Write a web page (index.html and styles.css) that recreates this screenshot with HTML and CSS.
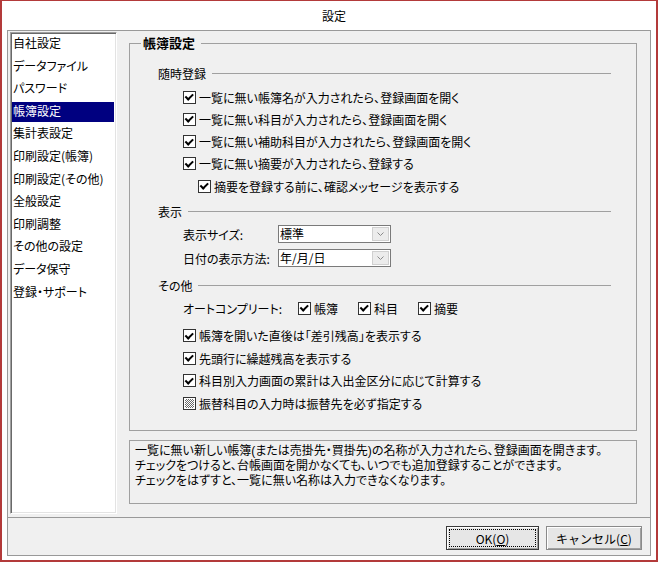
FILE: index.html
```html
<!DOCTYPE html>
<html lang="ja">
<head>
    <meta charset="UTF-8">
    <title>設定</title>
    <link rel="stylesheet" href="styles.css">
</head>
<body>
<div class="window">
    <div class="titlebar">設定</div>
    <div class="frame">
        <div class="main">
            <ul class="menu">
                <li>自社設定</li>
                <li>データファイル</li>
                <li>パスワード</li>
                <li class="selected">帳簿設定</li>
                <li>集計表設定</li>
                <li>印刷設定(帳簿)</li>
                <li>印刷設定(その他)</li>
                <li>全般設定</li>
                <li>印刷調整</li>
                <li>その他の設定</li>
                <li>データ保守</li>
                <li>登録・サポート</li>
            </ul>
            <div class="pane">
                <fieldset class="group">
                    <legend>帳簿設定</legend>

                    <div class="section first">随時登録</div>
                    <div class="checks top-checks">
                        <div class="row"><span class="cb"></span>一覧に無い帳簿名が入力されたら、登録画面を開く</div>
                        <div class="row"><span class="cb"></span>一覧に無い科目が入力されたら、登録画面を開く</div>
                        <div class="row"><span class="cb"></span>一覧に無い補助科目が入力されたら、登録画面を開く</div>
                        <div class="row"><span class="cb"></span>一覧に無い摘要が入力されたら、登録する</div>
                        <div class="row sub"><span class="cb"></span>摘要を登録する前に、確認メッセージを表示する</div>
                    </div>

                    <div class="section show">表示</div>
                    <div class="field">
                        <span class="field-label">表示サイズ:</span>
                        <span class="combo"><span class="combo-text">標準</span><span class="combo-btn"><svg width="7" height="4" viewBox="0 0 7 4"><path d="M0.5 0.5 L3.5 3.5 L6.5 0.5" fill="none" stroke="#8a8a8a"/></svg></span></span>
                    </div>
                    <div class="field">
                        <span class="field-label">日付の表示方法:</span>
                        <span class="combo"><span class="combo-text">年/月/日</span><span class="combo-btn"><svg width="7" height="4" viewBox="0 0 7 4"><path d="M0.5 0.5 L3.5 3.5 L6.5 0.5" fill="none" stroke="#8a8a8a"/></svg></span></span>
                    </div>

                    <div class="section other">その他</div>
                    <div class="auto">
                        <span class="auto-label">オートコンプリート:</span>
                        <span class="auto-item"><span class="cb"></span>帳簿</span>
                        <span class="auto-item"><span class="cb"></span>科目</span>
                        <span class="auto-item"><span class="cb"></span>摘要</span>
                    </div>
                    <div class="checks bottom-checks">
                        <div class="row"><span class="cb"></span>帳簿を開いた直後は「差引残高」を表示する</div>
                        <div class="row"><span class="cb"></span>先頭行に繰越残高を表示する</div>
                        <div class="row"><span class="cb"></span>科目別入力画面の累計は入出金区分に応じて計算する</div>
                        <div class="row"><span class="cb mixed"></span>振替科目の入力時は振替先を必ず指定する</div>
                    </div>
                </fieldset>

                <div class="help">
                    <div>一覧に無い新しい帳簿(または売掛先・買掛先)の名称が入力されたら、登録画面を開きます。</div>
                    <div>チェックをつけると、台帳画面を開かなくても、いつでも追加登録することができます。</div>
                    <div>チェックをはずすと、一覧に無い名称は入力できなくなります。</div>
                </div>
            </div>
        </div>
        <div class="buttons">
            <button class="btn default">OK(<u>O</u>)</button>
            <button class="btn">キャンセル(<u>C</u>)</button>
        </div>
    </div>
</div>
</body>
</html>
```

FILE: styles.css
```css
body {
    margin: 0;
    background: #fff;
    font-family: "Noto Sans CJK JP", sans-serif;
    font-size: 12px;
    color: #000;
    font-feature-settings: "palt";
}

.window {
    width: 658px;
    height: 562px;
    box-sizing: border-box;
    border: 2px solid #b33a3a;
    border-top-width: 1px;
    padding: 0 5px 4px;
    display: flex;
    flex-direction: column;
}

.titlebar {
    height: 29px;
    line-height: 29px;
    text-align: center;
    padding-left: 10px;
}

.frame {
    flex: 1;
    border: 1px solid #999;
    background: #f0f0f0;
    display: flex;
    flex-direction: column;
}

.main {
    height: 486px;
    display: flex;
}

/* left menu */
.menu {
    list-style: none;
    margin: 1px 0 0 2px;
    padding: 1px;
    width: 107px;
    height: 482px;
    box-sizing: border-box;
    background: #fff;
    border: 1px solid;
    border-color: #a0a0a0 #fff #fff #a0a0a0;
    box-shadow: inset 1px 1px 0 #696969, inset -1px -1px 0 #e3e3e3;
}

.menu li {
    height: 20px;
    line-height: 18px;
    margin-bottom: 2.6px;
    padding-left: 1px;
    white-space: nowrap;
}

.menu li.selected {
    background: #000080;
    color: #fff;
    margin-right: 1px;
}

/* right pane */
.pane {
    width: 508px;
    margin-left: 12px;
    padding-top: 4px;
    display: flex;
    flex-direction: column;
}

.group {
    margin: 0;
    padding: 0;
    height: 396px;
    box-sizing: border-box;
    border: 1px solid #a0a0a0;
    min-width: 0;
}

.group legend {
    margin-left: 11px;
    padding: 0 6px 0 2px;
    font-size: 13px;
    font-weight: bold;
    line-height: 16px;
}

.section {
    display: flex;
    align-items: center;
    height: 22px;
    margin: 0 25px 0 28px;
}

.section::after {
    content: "";
    flex: 1;
    border-top: 1px solid #a0a0a0;
    margin-left: 6px;
}

.section.first { margin-top: 11px; }
.section.show { margin-top: 3px; }
.section.other { margin-top: 4px; }

.top-checks { margin-top: 2px; }
.top-checks .row { height: 22.25px; }
.bottom-checks { margin-top: 5px; }
.bottom-checks .row { height: 22.67px; }

.row {
    display: flex;
    align-items: center;
    padding-left: 53px;
    white-space: nowrap;
}

.row.sub { padding-left: 68px; }

.cb {
    position: relative;
    width: 13px;
    height: 13px;
    box-sizing: border-box;
    border: 1px solid #333;
    background: #fff;
    margin-right: 3px;
    flex-shrink: 0;
}

.cb::after {
    content: "";
    position: absolute;
    left: 3px;
    top: 0.5px;
    width: 2.5px;
    height: 5.5px;
    border: solid #000;
    border-width: 0 2px 2px 0;
    transform: rotate(45deg);
}

.cb.mixed {
    background: repeating-conic-gradient(#6a6a6a 0 25%, #fff 0 50%) 0 0 / 2px 2px;
    box-shadow: inset 0 0 0 1px #fff;
}

.cb.mixed::after { display: none; }

.field {
    display: flex;
    align-items: center;
    height: 24px;
    padding-left: 53px;
}

.field-label { width: 95px; }

.combo {
    display: flex;
    width: 113px;
    height: 18px;
    box-sizing: border-box;
    border: 1px solid #7a7a7a;
    background: #fff;
}

.combo-text {
    flex: 1;
    padding-left: 1px;
    line-height: 16px;
}

.combo-btn {
    width: 15px;
    margin: 1px;
    border: 1px solid #d0d0d0;
    background: #ececec;
    display: flex;
    align-items: center;
    justify-content: center;
}

.auto {
    display: flex;
    align-items: center;
    height: 22px;
    margin-top: 1px;
    padding-left: 53px;
}

.auto-label { width: 115px; }

.auto-item {
    display: flex;
    align-items: center;
    width: 60px;
}

.help {
    margin-top: 9px;
    height: 64px;
    box-sizing: border-box;
    border: 1px solid #a0a0a0;
    padding: 3px 5px;
    font-family: "Liberation Sans", "Noto Sans CJK JP", sans-serif;
    line-height: 15px;
    white-space: nowrap;
}

/* bottom buttons */
.buttons {
    flex: 1;
    border-top: 1px solid #999;
    display: flex;
    justify-content: flex-end;
    align-items: flex-start;
    gap: 7px;
    padding: 8px 8px 0;
}

.btn {
    width: 96px;
    height: 24px;
    padding: 0;
    font-family: inherit;
    font-size: 12px;
    color: #000;
    background: #e6e6e6;
    border: 1px solid #8a8a8a;
    box-shadow: inset 1px 1px 0 #fff, inset -1px -1px 0 #a0a0a0;
}

.btn.default {
    width: 93px;
    border-color: #3a3a3a;
    outline: 1px dotted #000;
    outline-offset: -4px;
}
```
